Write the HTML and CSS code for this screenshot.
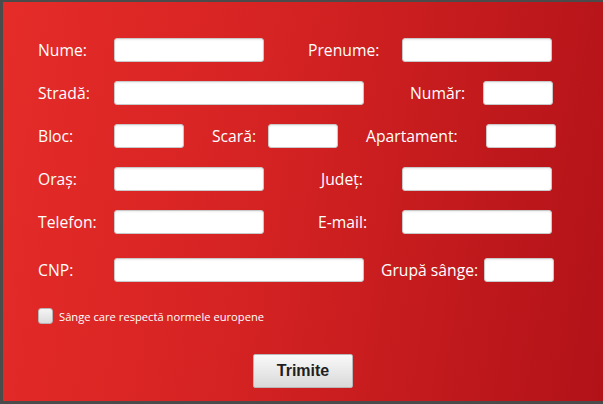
FILE: index.html
```html
<!DOCTYPE html>
<html lang="ro">
<head>
<meta charset="utf-8">
<link rel="stylesheet" href="styles.css">
</head>
<body>
<form class="panel">
  <div class="row">
    <label class="lbl w76">Nume:</label>
    <input class="field w150" type="text">
    <label class="lbl ml44 w94">Prenume:</label>
    <input class="field w150" type="text">
  </div>
  <div class="row">
    <label class="lbl w76">Stradă:</label>
    <input class="field w249" type="text">
    <label class="lbl ml47 w73">Număr:</label>
    <input class="field w70" type="text">
  </div>
  <div class="row">
    <label class="lbl w76">Bloc:</label>
    <input class="field w70" type="text">
    <label class="lbl ml28 w56">Scară:</label>
    <input class="field w70" type="text">
    <label class="lbl ml28 w120">Apartament:</label>
    <input class="field w70" type="text">
  </div>
  <div class="row">
    <label class="lbl w76">Oraș:</label>
    <input class="field w150" type="text">
    <label class="lbl ml57 w81">Județ:</label>
    <input class="field w150" type="text">
  </div>
  <div class="row">
    <label class="lbl w76">Telefon:</label>
    <input class="field w150" type="text">
    <label class="lbl ml54 w84">E-mail:</label>
    <input class="field w150" type="text">
  </div>
  <div class="row row-gap">
    <label class="lbl w76">CNP:</label>
    <input class="field w249" type="text">
    <label class="lbl ml17 w103">Grupă sânge:</label>
    <input class="field w70" type="text">
  </div>
  <label class="check">
    <span class="box"></span>
    <span class="check-text">Sânge care respectă normele europene</span>
  </label>
  <div class="actions">
    <button class="submit" type="button">Trimite</button>
  </div>
</form>
</body>
</html>
```
FILE: styles.css
```css
html, body {
  margin: 0;
  padding: 0;
}
body {
  background: #4b4b4b;
  width: 603px;
  height: 404px;
  overflow: hidden;
  padding: 2px 0 0 3px;
  box-sizing: border-box;
  font-family: "Open Sans", "Noto Sans", "DejaVu Sans", sans-serif;
}
.panel {
  width: 600px;
  height: 399px;
  box-sizing: border-box;
  padding: 36px 0 0 35px;
  background: linear-gradient(100deg, #e52c29 0%, #d42222 45%, #b11218 100%);
  display: flex;
  flex-direction: column;
  gap: 19px;
}
.row {
  display: flex;
  align-items: center;
  height: 24px;
}
.row-gap {
  margin-top: 5px;
}
.lbl {
  color: #ffffff;
  font-size: 15.7px;
  line-height: 24px;
  white-space: nowrap;
  flex: none;
}
.field {
  flex: none;
  box-sizing: border-box;
  height: 24px;
  margin: 0;
  padding: 0 4px;
  border: 1px solid #c9c9c9;
  border-radius: 3px;
  background: #fff;
  box-shadow: inset 0 1px 2px rgba(0,0,0,0.08);
}
.w70 { width: 70px; }
.w150 { width: 150px; }
.w249 { width: 250px; }
.w56 { width: 56px; }
.w73 { width: 73px; }
.w76 { width: 76px; }
.w81 { width: 81px; }
.w84 { width: 84px; }
.w94 { width: 94px; }
.w103 { width: 103px; }
.w120 { width: 120px; }
.ml17 { margin-left: 17px; }
.ml28 { margin-left: 28px; }
.ml44 { margin-left: 44px; }
.ml47 { margin-left: 46px; }
.ml54 { margin-left: 54px; }
.ml57 { margin-left: 57px; }
.check {
  display: flex;
  align-items: center;
  margin-top: 7px;
  height: 16px;
}
.box {
  width: 15px;
  height: 16px;
  box-sizing: border-box;
  border: 1px solid #b5b5b5;
  border-radius: 3px;
  background: linear-gradient(#f4f4f4, #dcdcdc);
  flex: none;
}
.check-text {
  margin-left: 6px;
  color: #fff;
  font-size: 11.2px;
}
.actions {
  display: flex;
  padding-left: 215px;
  margin-top: 11px;
}
.submit {
  width: 100px;
  height: 34px;
  box-sizing: border-box;
  border: 1px solid #b8b8b8;
  border-radius: 2px;
  background: linear-gradient(#f9f9f9, #d9d9d9);
  font-family: "Liberation Sans", Arial, sans-serif;
  font-weight: bold;
  font-size: 16px;
  color: #1f1f1f;
  padding: 0;
}
```
